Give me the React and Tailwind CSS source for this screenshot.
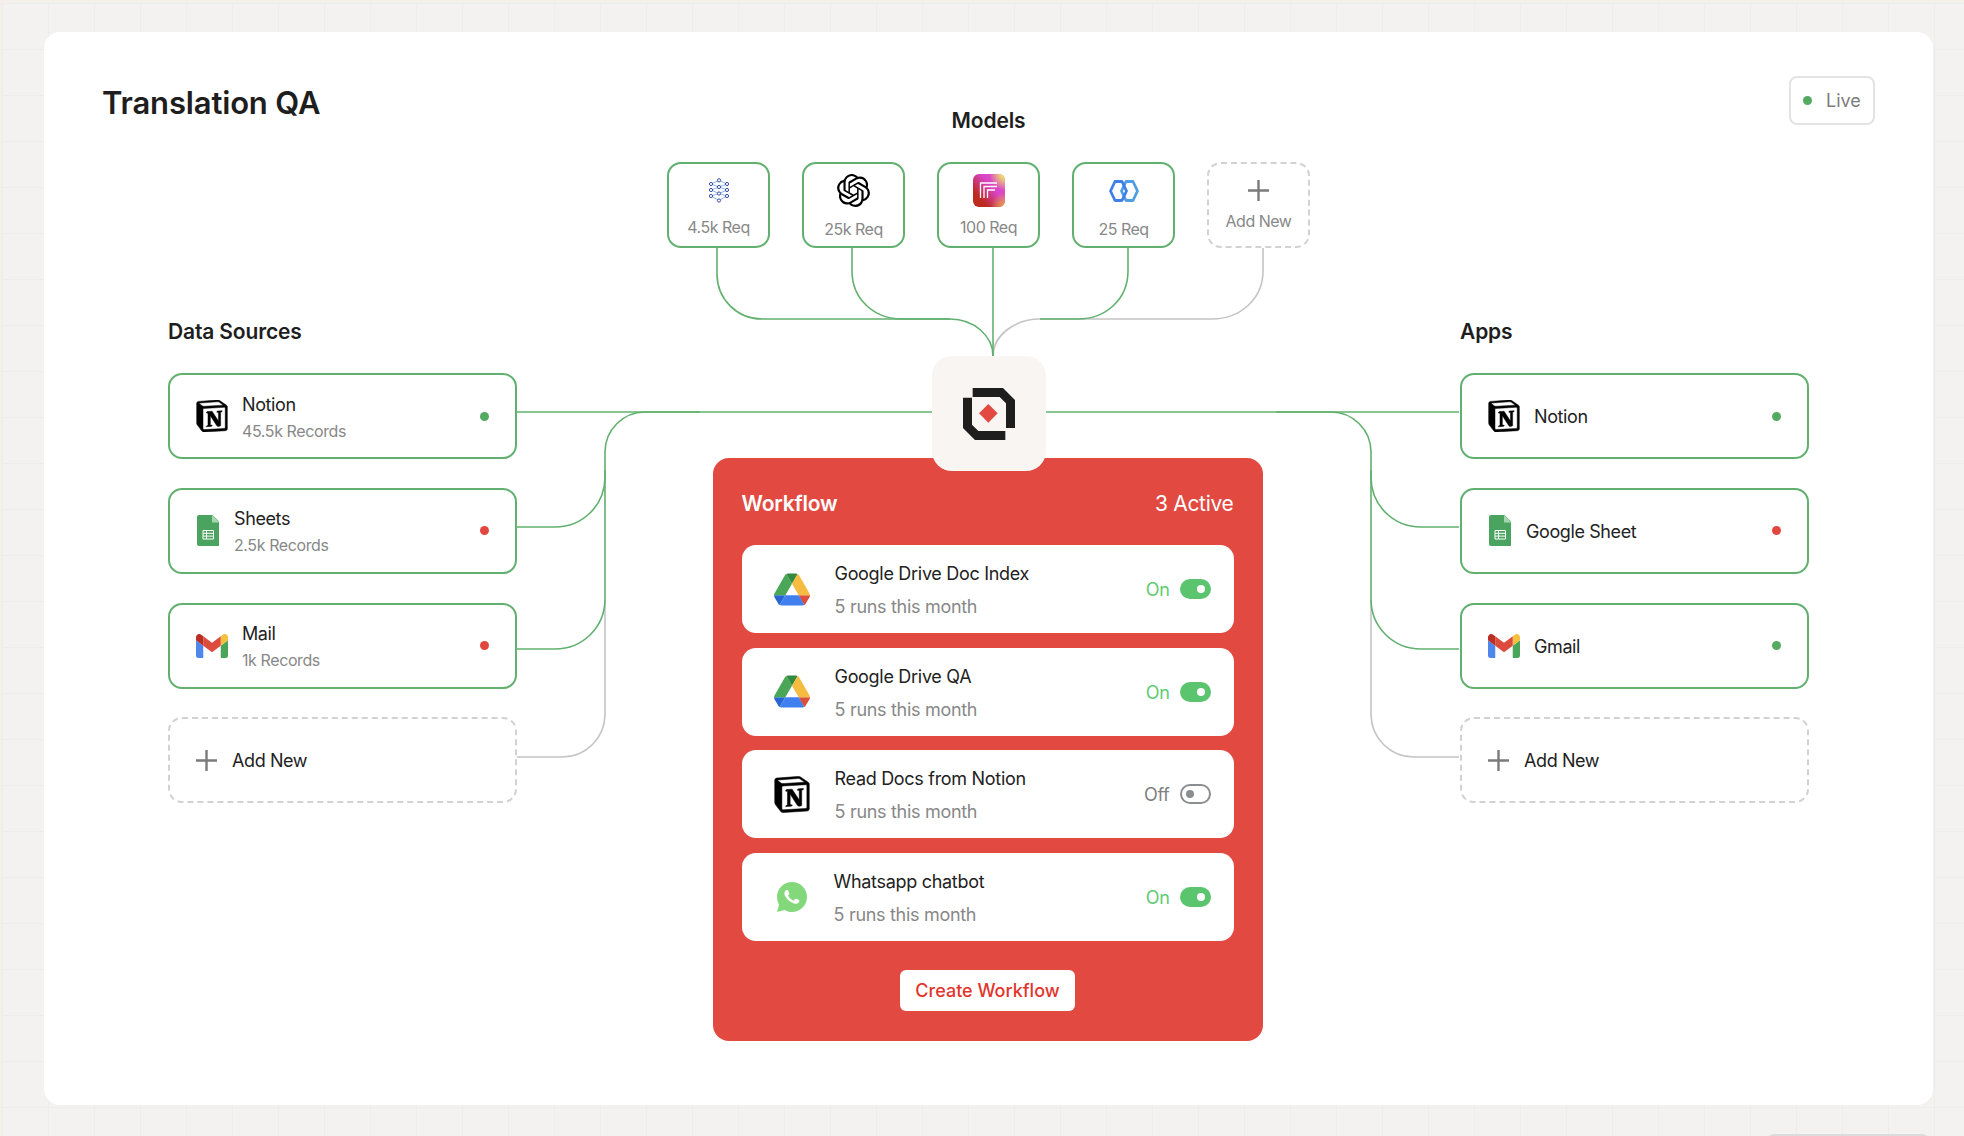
import React from "react";
import { SiNotion, SiOpenai } from "react-icons/si";
import { RiWhatsappFill } from "react-icons/ri";

/* ---------- icons ---------- */
function NotionIcon({ className }) {
  return <SiNotion className={`text-black ${className}`} style={{ stroke: "#000", strokeWidth: 0.35 }} />;
}

function SheetsIcon({ className }) {
  return (
    <svg className={className} viewBox="0 0 22.5 31">
      <path d="M2 0h13.5l7 7v22a2 2 0 0 1-2 2H2a2 2 0 0 1-2-2V2a2 2 0 0 1 2-2z" fill="#4aa35f" />
      <path d="M15 0l7.5 7.5H15z" fill="#a5d6b0" />
      <path d="M6 15.5h10.5v8.5H6z M6 18.3h10.5 M6 21.1h10.5 M9.5 15.5v8.5" fill="none" stroke="#fff" strokeWidth="1" />
    </svg>
  );
}

function GmailIcon({ className }) {
  return (
    <svg className={className} viewBox="52 42 88 66">
      <path fill="#4f86ec" d="M58 108h14V74L52 59v43c0 3.32 2.69 6 6 6" />
      <path fill="#4aa55a" d="M120 108h14c3.32 0 6-2.69 6-6V59l-20 15" />
      <path fill="#f4c03e" d="M120 48v26l20-15v-8c0-7.42-8.47-11.65-14.4-7.2" />
      <path fill="#dc4b3e" d="M72 74V48l24 18 24-18v26L96 92" />
      <path fill="#b92e25" d="M52 51v8l20 15V48l-5.6-4.2c-5.94-4.45-14.4-.22-14.4 7.2" />
    </svg>
  );
}

function DriveIcon({ className }) {
  return (
    <svg className={className} viewBox="0 0 87.3 78">
      <path d="m6.6 66.85 3.85 6.65c.8 1.4 1.95 2.5 3.3 3.3l13.75-23.8h-27.5c0 1.55.4 3.1 1.2 4.5z" fill="#2a66d3" />
      <path d="m43.65 25-13.75-23.8c-1.35.8-2.5 1.9-3.3 3.3l-25.4 44a9.06 9.06 0 0 0 -1.2 4.5h27.5z" fill="#4aa757" />
      <path d="m73.55 76.8c1.35-.8 2.5-1.9 3.3-3.3l1.6-2.75 7.65-13.25c.8-1.4 1.2-2.95 1.2-4.5h-27.502l5.852 11.5z" fill="#dc4f3e" />
      <path d="m43.65 25 13.75-23.8c-1.35-.8-2.9-1.2-4.5-1.2h-18.5c-1.6 0-3.15.45-4.5 1.2z" fill="#35883f" />
      <path d="m59.8 53h-32.3l-13.75 23.8c1.35.8 2.9 1.2 4.5 1.2h50.8c1.6 0 3.15-.45 4.5-1.2z" fill="#3f80ee" />
      <path d="m73.4 26.5-12.7-22c-.8-1.4-1.95-2.5-3.3-3.3l-13.75 23.8 16.15 28h27.45c0-1.55-.4-3.1-1.2-4.5z" fill="#f6bc41" />
    </svg>
  );
}

function PlusIcon({ className }) {
  return (
    <svg className={className} viewBox="0 0 21 21">
      <path d="M10.5 0v21M0 10.5h21" stroke="#7b7b7b" strokeWidth="2.4" fill="none" />
    </svg>
  );
}

function MeshIcon({ className }) {
  const nodes = [
    [11, 1.8], [3, 5.5], [19, 5.5], [11, 8.5], [3, 11.5], [19, 11.5], [11, 15], [3, 17.5], [19, 17.5], [11, 22],
  ];
  return (
    <svg className={className} viewBox="0 0 22 24">
      <path d="M3 5.5L11 8.5L19 5.5M3 11.5L11 8.5L19 11.5M3 11.5L11 15L19 11.5M3 17.5L11 15L19 17.5M3 17.5L11 22L19 17.5M3 5.5L11 1.8L19 5.5" stroke="#7fb0e8" strokeWidth="0.9" fill="none" />
      {nodes.map(([x, y], i) => (
        <circle key={i} cx={x} cy={y} r="1.6" fill="#fff" stroke="#3f4fa3" strokeWidth="1" />
      ))}
    </svg>
  );
}

function GradientIcon({ className }) {
  return (
    <svg className={className} viewBox="0 0 32 33">
      <defs>
        <linearGradient id="fg" x1="0" y1="1" x2="1" y2="0.1">
          <stop offset="0.25" stopColor="#bd2a1e" />
          <stop offset="0.62" stopColor="#d944c4" />
          <stop offset="1" stopColor="#e04ed0" />
        </linearGradient>
        <radialGradient id="fy" cx="1" cy="0" r="0.5">
          <stop offset="0.1" stopColor="#eef25a" />
          <stop offset="1" stopColor="#eef25a" stopOpacity="0" />
        </radialGradient>
        <radialGradient id="fo" cx="1" cy="1" r="0.45">
          <stop offset="0" stopColor="#ecb02e" />
          <stop offset="1" stopColor="#ecb02e" stopOpacity="0" />
        </radialGradient>
      </defs>
      <rect width="32" height="33" rx="6" fill="url(#fg)" />
      <rect width="32" height="33" rx="6" fill="url(#fo)" />
      <rect width="32" height="33" rx="6" fill="url(#fy)" />
      <path d="M7.5 24V9H24M11 24V12.5H24M14.5 24V16H22" stroke="#fff" strokeWidth="1.3" fill="none" />
    </svg>
  );
}

function HexIcon({ className }) {
  return (
    <svg className={className} viewBox="0 0 30 22">
      <path d="M17 1.5h7l4.5 9.5-4.5 9.5h-7L12.5 11z" fill="none" stroke="#4f9ee4" strokeWidth="2.8" strokeLinejoin="round" />
      <path d="M6 1.5h7l4.5 9.5L13 20.5H6L1.5 11z" fill="none" stroke="#3f7fe8" strokeWidth="2.8" strokeLinejoin="round" />
    </svg>
  );
}

function LogoMark({ className }) {
  return (
    <svg className={className} viewBox="38 38 156 156">
      <path d="M67 38H158L194 74V158H167V84L148 65H67Z" fill="#1e1e1e" />
      <path d="M38 67H65V148L84 167H165V194H74L38 158Z" fill="#1e1e1e" />
      <path d="M114 86L142 114L114 142L86 114Z" fill="#e24a41" />
    </svg>
  );
}

/* ---------- connector lines, drawn in page coordinates ---------- */
const GREEN = "#62b06f";
const GREY = "#c4c4c4";

function Connectors() {
  const mirror = "translate(1976 0) scale(-1 1)";
  return (
    <svg className="absolute inset-0 pointer-events-none" width="1889" height="1073" viewBox="44 32 1889 1073" fill="none" strokeWidth="1.6">
      {[undefined, mirror].map((t, i) => (
        <g key={i} transform={t}>
          <path d="M517 757H562C586 757 605 738 605 714V600" stroke={GREY} />
          <path d="M517 412H932" stroke={GREEN} />
          <path d="M517 527H555C583 527 605 505 605 477V452C605 430 623 412 645 412H700" stroke={GREEN} />
          <path d="M517 649H555C583 649 605 627 605 599V470" stroke={GREEN} />
        </g>
      ))}
      {/* models */}
      <path d="M1263 248V271C1263 299 1240 319 1212 319H1040C1014 319 993 336 993 356" stroke={GREY} />
      <path d="M717 248V274C717 299 737 319 762 319H950C974 319 993 336 993 356" stroke={GREEN} />
      <path d="M852 248V271C852 299 874 319 902 319H950" stroke={GREEN} />
      <path d="M1128 248V271C1128 299 1106 319 1078 319H1040" stroke={GREEN} />
      <path d="M993 248V356" stroke={GREEN} />
    </svg>
  );
}

/* ---------- small parts ---------- */
function StatusDot({ ok }) {
  return <span className={`w-[9px] h-[9px] rounded-full ml-auto ${ok ? "bg-[#55aa62]" : "bg-[#e2473f]"}`} />;
}

function SourceCard({ icon, iconBox, gap, title, sub, ok }) {
  return (
    <div className={`h-[86px] bg-white rounded-[14px] border-2 border-[#62b06f] pl-[26px] pr-[26px] flex items-center ${gap}`}>
      <div className={`shrink-0 flex items-center justify-center ${iconBox}`}>{icon}</div>
      <div className="flex flex-col pt-[2px]">
        <span className="text-[18px] leading-[24px] tracking-[-0.4px] text-[#222]">{title}</span>
        {sub && <span className="text-[16px] leading-[22px] mt-[3px] tracking-[-0.4px] text-[#888]">{sub}</span>}
      </div>
      <StatusDot ok={ok} />
    </div>
  );
}

function AddNewCard() {
  return (
    <div className="h-[86px] bg-white rounded-[14px] border-2 border-dashed border-[#d2d2d2] pl-[26px] flex items-center gap-[15px]">
      <PlusIcon className="w-[21px] h-[21px]" />
      <span className="pt-[2px] text-[18px] leading-[24px] tracking-[-0.4px] text-[#222]">Add New</span>
    </div>
  );
}

function ModelBox({ icon, label, labelTop, dashed }) {
  return (
    <div className={`w-[103px] h-[86px] bg-white rounded-[14px] border-2 flex flex-col items-center pt-[10px] ${dashed ? "border-dashed border-[#d2d2d2]" : "border-[#62b06f]"}`}>
      <div className="h-[33px] flex items-center justify-center">{icon}</div>
      <span className={`text-[16px] leading-[20px] tracking-[-0.5px] text-[#888] ${labelTop}`}>{label}</span>
    </div>
  );
}

function Toggle({ on }) {
  if (on) {
    return (
      <span className="w-[31px] h-[20px] rounded-full bg-[#5bc46f] flex items-center justify-end pr-[6px]">
        <span className="w-[8px] h-[8px] rounded-full bg-white" />
      </span>
    );
  }
  return (
    <span className="w-[31px] h-[20px] rounded-full border-[2.5px] border-[#8b8e91] flex items-center pl-[4px]">
      <span className="w-[8px] h-[8px] rounded-full bg-[#8b8e91]" />
    </span>
  );
}

function WorkflowRow({ icon, gap, title, on }) {
  return (
    <div className={`h-[88px] bg-white rounded-[14px] pl-[32px] pr-[23px] flex items-center ${gap}`}>
      <div className="w-[36px] shrink-0 flex items-center justify-center">{icon}</div>
      <div className="flex flex-col pt-[3px]">
        <span className="text-[18px] leading-[24px] tracking-[-0.3px] text-[#222]">{title}</span>
        <span className="text-[18px] leading-[24px] mt-[9px] tracking-[-0.3px] text-[#888]">5 runs this month</span>
      </div>
      <div className="ml-auto flex items-center gap-[10px]">
        <span className={`pt-[2px] text-[18px] leading-[24px] tracking-[-0.3px] ${on ? "text-[#5fcb74]" : "text-[#808080]"}`}>{on ? "On" : "Off"}</span>
        <Toggle on={on} />
      </div>
    </div>
  );
}

const headingClass = "text-[21px] leading-[28px] font-semibold tracking-[-0.15px] text-[#1e1e1e]";

export default function App() {
  return (
    <div
      className="h-[1136px] overflow-hidden border-t-2 border-l-2 border-[#f4efe8] bg-[#f3f2f0] bg-[linear-gradient(to_right,#eeedea_1px,transparent_1px),linear-gradient(to_bottom,#eeedea_1px,transparent_1px)] bg-[size:46px_46px] bg-[position:0px_1px] pt-[30px] pl-[42px]"
      style={{ fontFamily: "Inter, 'Liberation Sans', sans-serif" }}
    >
      <div className="relative w-[1889px] h-[1073px] bg-white rounded-[16px] px-[58px] pt-[52px] flex justify-between">
        <Connectors />

        {/* left column */}
        <div className="relative w-[415px]">
          <h1 className="text-[31px] leading-[38px] font-semibold tracking-[-0.15px] text-[#1e1e1e]">Translation QA</h1>
          <div className="ml-[66px] mt-[196px]">
            <h2 className={headingClass}>Data Sources</h2>
            <div className="mt-[27.33px] flex flex-col gap-[28.67px]">
              <SourceCard icon={<NotionIcon className="w-[32px] h-[32px]" />} iconBox="w-[32px]" gap="gap-[14px]" title="Notion" sub="45.5k Records" ok />
              <SourceCard icon={<SheetsIcon className="w-[22.5px] h-[31px]" />} iconBox="w-[24px]" gap="gap-[14px]" title="Sheets" sub="2.5k Records" />
              <SourceCard icon={<GmailIcon className="w-[32px] h-[24px]" />} iconBox="w-[32px]" gap="gap-[14px]" title="Mail" sub="1k Records" />
              <AddNewCard />
            </div>
          </div>
        </div>

        {/* center column */}
        <div className="relative w-[643px] flex flex-col items-center">
          <h2 className={`${headingClass} mt-[23px]`}>Models</h2>
          <div className="mt-[27px] w-full flex justify-between">
            <ModelBox icon={<MeshIcon className="w-[22px] h-[25px]" />} label="4.5k Req" labelTop="mt-[10px]" />
            <ModelBox icon={<SiOpenai className="w-[33px] h-[33px] text-black" />} label="25k Req" labelTop="mt-[12px]" />
            <ModelBox icon={<GradientIcon className="w-[32px] h-[33px]" />} label="100 Req" labelTop="mt-[10px]" />
            <ModelBox icon={<HexIcon className="w-[30px] h-[22px]" />} label="25 Req" labelTop="mt-[12px]" />
            <ModelBox icon={<PlusIcon className="w-[21px] h-[21px]" />} label="Add New" labelTop="mt-[4px]" dashed />
          </div>

          <div className="relative z-10 mt-[108px] w-[114px] h-[115px] rounded-[20px] bg-[#f8f5f2] flex items-center justify-center">
            <LogoMark className="w-[52px] h-[52px]" />
          </div>

          <div className="-mt-[13px] mr-[2px] w-[550px] h-[583px] rounded-[16px] bg-[#e24a41] px-[29px] pt-[32px]">
            <div className="flex items-center justify-between">
              <span className="text-[21px] leading-[28px] font-semibold tracking-[-0.2px] text-white">Workflow</span>
              <span className="text-[21px] leading-[28px] tracking-[-0.3px] text-white">3 Active</span>
            </div>
            <div className="mt-[27px] flex flex-col gap-[14.67px]">
              <WorkflowRow icon={<DriveIcon className="w-[36px] h-[33px]" />} gap="gap-[25px]" title="Google Drive Doc Index" on />
              <WorkflowRow icon={<DriveIcon className="w-[36px] h-[33px]" />} gap="gap-[25px]" title="Google Drive QA" on />
              <WorkflowRow icon={<NotionIcon className="w-[37px] h-[37px]" />} gap="gap-[25px]" title="Read Docs from Notion" />
              <WorkflowRow icon={<RiWhatsappFill className="w-[36px] h-[36px] text-[#82d87a]" />} gap="gap-[24px]" title="Whatsapp chatbot" on />
            </div>
            <div className="mt-[29px] flex justify-center">
              <button className="w-[175px] h-[41px] rounded-[6px] bg-white text-[18px] font-medium tracking-[0px] text-[#e2352d]">Create Workflow</button>
            </div>
          </div>
        </div>

        {/* right column */}
        <div className="relative w-[415px] flex flex-col">
          <div className="h-[38px]">
            <div className="ml-auto -mt-[8px] w-[86px] h-[49px] rounded-[8px] border-2 border-[#e3e3e3] bg-white flex items-center pl-[12px] gap-[14px]">
              <span className="w-[9px] h-[9px] rounded-full bg-[#55aa62]" />
              <span className="text-[18px] leading-[24px] text-[#7c7c7c]">Live</span>
            </div>
          </div>
          <div className="mr-[66px] mt-[196px]">
            <h2 className={headingClass}>Apps</h2>
            <div className="mt-[27.33px] flex flex-col gap-[28.67px]">
              <SourceCard icon={<NotionIcon className="w-[32px] h-[32px]" />} iconBox="w-[32px]" gap="gap-[14px]" title="Notion" ok />
              <SourceCard icon={<SheetsIcon className="w-[22.5px] h-[31px]" />} iconBox="w-[24px]" gap="gap-[14px]" title="Google Sheet" />
              <SourceCard icon={<GmailIcon className="w-[32px] h-[24px]" />} iconBox="w-[32px]" gap="gap-[14px]" title="Gmail" ok />
              <AddNewCard />
            </div>
          </div>
        </div>
      </div>

      {/* next card peeking in at the page bottom */}
      <div className="mt-[29px] ml-[1722px] w-[164px] h-[20px] rounded-t-[8px] bg-white border-2 border-[#dcdcdc]" />
    </div>
  );
}
